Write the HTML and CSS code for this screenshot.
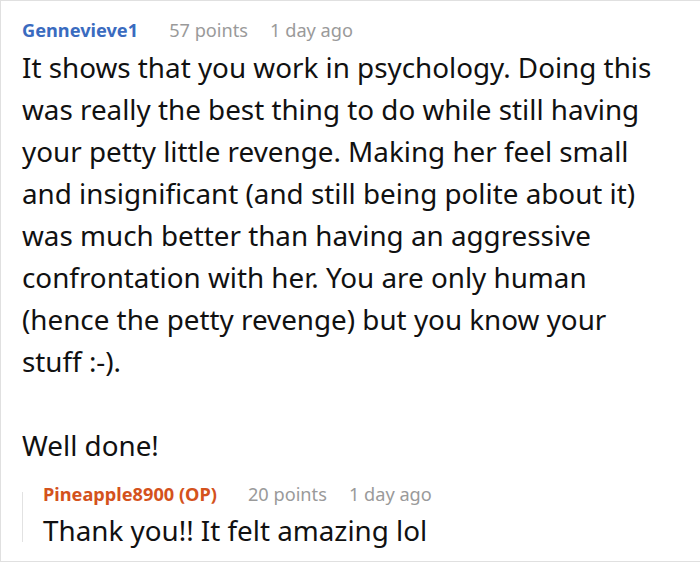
FILE: index.html
```html
<!DOCTYPE html>
<html>
<head>
<meta charset="utf-8">
<link rel="stylesheet" href="styles.css">
</head>
<body>
<div class="frame">
  <div class="comment">
    <div class="meta">
      <span class="author">Gennevieve1</span>
      <span class="info">57 points</span>
      <span class="info">1 day ago</span>
    </div>
    <div class="body main">
      <p>It shows that you work in psychology. Doing this was really the best thing to do while still having your petty little revenge. Making her feel small and insignificant (and still being polite about it) was much better than having an aggressive confrontation with her. You are only human (hence the petty revenge) but you know your stuff :-).</p>
      <p>Well done!</p>
    </div>
    <div class="reply">
      <div class="meta">
        <span class="author op">Pineapple8900 (OP)</span>
        <span class="info">20 points</span>
        <span class="info">1 day ago</span>
      </div>
      <div class="body">
        <p>Thank you!! It felt amazing lol</p>
      </div>
    </div>
  </div>
</div>
</body>
</html>
```
FILE: styles.css
```css
html, body {
  margin: 0;
  padding: 0;
  background: #fff;
}
.frame {
  width: 700px;
  height: 562px;
  box-sizing: border-box;
  border: 1px solid #e0e0e0;
  border-right: none;
  overflow: hidden;
  font-family: "Noto Sans", "Open Sans", sans-serif;
}
.comment {
  padding: 17px 30px 0 21px;
}
.meta {
  display: flex;
  gap: 22px;
  font-size: 18.2px;
  line-height: 24px;
}
.author {
  font-weight: bold;
  color: #3a6bbf;
  margin-right: 9px;
}
.author.op {
  color: #d4521c;
}
.info {
  color: #9a9a9a;
}
.body {
  font-size: 27.8px;
  line-height: 42px;
  color: #111;
  margin-top: 3px;
}
.body.main {
  margin-top: 4px;
}
.body p {
  margin: 0 0 42px 0;
}
.body p:last-child {
  margin-bottom: 0;
}
.reply {
  position: relative;
  margin-top: 16px;
  padding-left: 21px;
}
.reply::before {
  content: "";
  position: absolute;
  left: 0;
  top: 10px;
  width: 1px;
  height: 50px;
  background: #e2e2e2;
}
```
